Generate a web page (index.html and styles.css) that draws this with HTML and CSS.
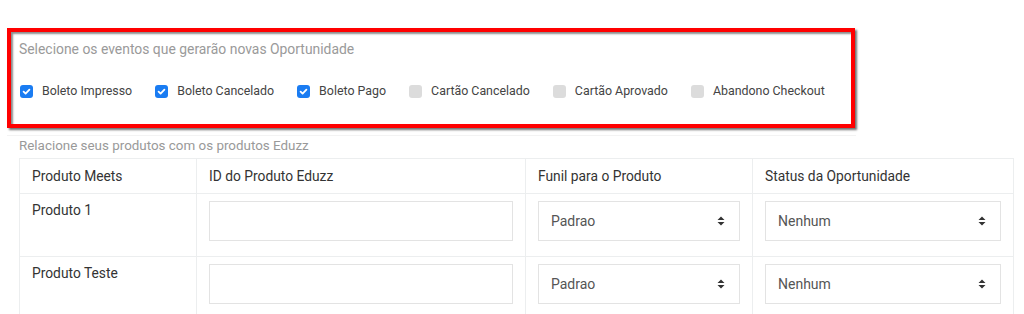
FILE: index.html
```html
<!DOCTYPE html>
<html lang="pt-BR">
<head>
<meta charset="utf-8">
<link rel="stylesheet" href="styles.css">
</head>
<body>
<div class="page">
  <section class="events">
    <p class="events-title">Selecione os eventos que gerarão novas Oportunidade</p>
    <div class="checks">
      <label class="check"><span class="box on"><svg viewBox="0 0 13 13" width="13" height="13"><path d="M3.6 6.7 L5.6 8.6 L9.4 4.6" fill="none" stroke="#fff" stroke-width="1.8" stroke-linecap="round" stroke-linejoin="round"/></svg></span>Boleto Impresso</label>
      <label class="check"><span class="box on"><svg viewBox="0 0 13 13" width="13" height="13"><path d="M3.6 6.7 L5.6 8.6 L9.4 4.6" fill="none" stroke="#fff" stroke-width="1.8" stroke-linecap="round" stroke-linejoin="round"/></svg></span>Boleto Cancelado</label>
      <label class="check"><span class="box on"><svg viewBox="0 0 13 13" width="13" height="13"><path d="M3.6 6.7 L5.6 8.6 L9.4 4.6" fill="none" stroke="#fff" stroke-width="1.8" stroke-linecap="round" stroke-linejoin="round"/></svg></span>Boleto Pago</label>
      <label class="check"><span class="box"></span>Cartão Cancelado</label>
      <label class="check"><span class="box"></span>Cartão Aprovado</label>
      <label class="check"><span class="box"></span>Abandono Checkout</label>
    </div>
  </section>
  <div class="sep"></div>
  <p class="table-title">Relacione seus produtos com os produtos Eduzz</p>
  <table class="products">
    <colgroup>
      <col class="c1"><col class="c2"><col class="c3"><col class="c4">
    </colgroup>
    <thead>
      <tr><th>Produto Meets</th><th>ID do Produto Eduzz</th><th>Funil para o Produto</th><th>Status da Oportunidade</th></tr>
    </thead>
    <tbody>
      <tr>
        <td>Produto 1</td>
        <td><div class="input"></div></td>
        <td><div class="select"><span>Padrao</span><svg class="arrows" viewBox="0 0 8 10" width="8" height="10"><path d="M4 0.5 L7.5 4 L0.5 4 Z M4 9.5 L7.5 6 L0.5 6 Z" fill="#333"/></svg></div></td>
        <td><div class="select"><span>Nenhum</span><svg class="arrows" viewBox="0 0 8 10" width="8" height="10"><path d="M4 0.5 L7.5 4 L0.5 4 Z M4 9.5 L7.5 6 L0.5 6 Z" fill="#333"/></svg></div></td>
      </tr>
      <tr>
        <td>Produto Teste</td>
        <td><div class="input"></div></td>
        <td><div class="select"><span>Padrao</span><svg class="arrows" viewBox="0 0 8 10" width="8" height="10"><path d="M4 0.5 L7.5 4 L0.5 4 Z M4 9.5 L7.5 6 L0.5 6 Z" fill="#333"/></svg></div></td>
        <td><div class="select"><span>Nenhum</span><svg class="arrows" viewBox="0 0 8 10" width="8" height="10"><path d="M4 0.5 L7.5 4 L0.5 4 Z M4 9.5 L7.5 6 L0.5 6 Z" fill="#333"/></svg></div></td>
      </tr>
    </tbody>
  </table>
</div>
</body>
</html>
```
FILE: styles.css
```css
* { box-sizing: border-box; }
html, body { margin: 0; padding: 0; background: #fff; }
body {
  font-family: Roboto, "Liberation Sans", Arial, sans-serif;
  font-size: 13px;
  color: #333;
  overflow: hidden;
}
.page { padding: 28px 0 0 0; }

.events {
  margin-left: 7px;
  width: 848px;
  height: 100px;
  border: 4px solid #ff0000;
  box-shadow: 2px 2px 2px rgba(0,0,0,0.55), inset 2px 2px 2px rgba(0,0,0,0.45);
  padding: 9px 8px 0 8px;
}
.events-title {
  margin: 0;
  line-height: 16px;
  color: #9a9a9a;
  font-size: 13.9px;
  white-space: nowrap;
}
.checks {
  display: flex;
  align-items: center;
  gap: 23px;
  margin-top: 26px;
  padding-left: 1px;
  height: 16px;
}
.check {
  display: flex;
  align-items: center;
  flex-shrink: 0;
  gap: 9px;
  line-height: 16px;
  color: #444;
  font-size: 12.4px;
  white-space: nowrap;
}
.box {
  width: 13px;
  height: 13px;
  flex-shrink: 0;
  border-radius: 3px;
  background: #dcdcdc;
  display: flex;
}
.box.on { background: #1a7cf2; }

.sep {
  margin: 7px 0 0 7px;
  width: 849px;
  height: 1px;
  background: #f3f3f3;
}
.table-title {
  margin: 2px 0 0 19px;
  line-height: 16px;
  color: #999;
  font-size: 13.4px;
  white-space: nowrap;
}
.products {
  margin: 4px 0 0 19px;
  width: 994px;
  border-collapse: collapse;
  table-layout: fixed;
}
.c1 { width: 177px; }
.c2 { width: 329px; }
.c3 { width: 227px; }
.c4 { width: 261px; }
.products th, .products td {
  border: 1px solid #eceeef;
  text-align: left;
  vertical-align: top;
  font-weight: 400;
  font-size: 13.8px;
  line-height: 18px;
  color: #333;
  white-space: nowrap;
}
.products th { padding: 8px 12px; }
.products td { padding: 7px 12px 15px 12px; }
.input {
  height: 40px;
  border: 1px solid #e3e3e3;
  background: #fff;
}
.select {
  height: 40px;
  border: 1px solid #e3e3e3;
  display: flex;
  align-items: center;
  justify-content: space-between;
  padding: 0 14px 0 12px;
  font-size: 14px;
  color: #555;
}
.arrows { display: block; }
```
